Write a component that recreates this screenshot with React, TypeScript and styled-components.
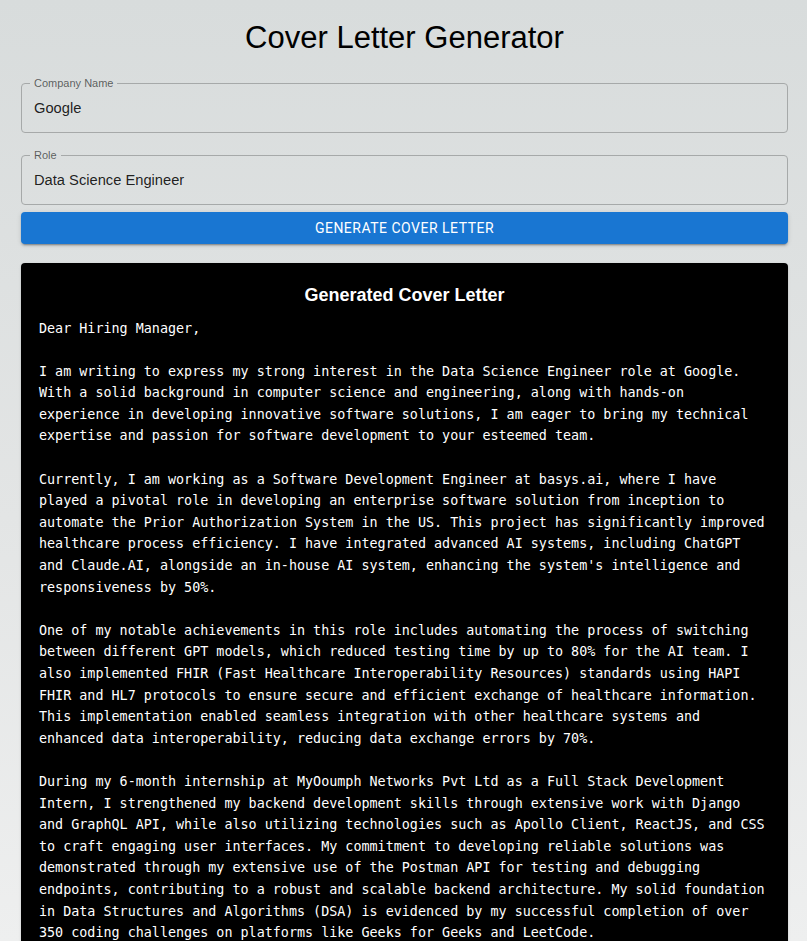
import React from "react";
import styled, { createGlobalStyle } from "styled-components";

const GlobalStyle = createGlobalStyle`
  html {
    min-height: 100%;
    background: linear-gradient(to bottom, #d8dcdc 0%, #e3e5e5 55%, #eeefef 100%);
    background-attachment: fixed;
  }
  body {
    margin: 0;
    font-family: "Liberation Sans", Arial, sans-serif;
    color: rgba(0, 0, 0, 0.87);
  }
  * { box-sizing: border-box; }
`;

const Page = styled.main`
  display: flex;
  flex-direction: column;
  padding: 20px 19px 0 21px;
`;

const Title = styled.h1`
  margin: 0 0 21px;
  font-family: "Liberation Sans", Arial, sans-serif;
  font-size: 31px;
  line-height: 36px;
  font-weight: 400;
  color: #000;
  text-align: center;
`;

const Field = styled.fieldset<{ $gap: number }>`
  margin: 0 0 ${(p) => p.$gap}px;
  padding: 0 12px 6px 8px;
  border: 1px solid #a6a9a9;
  border-radius: 4px;
  min-width: 0;
`;

const Legend = styled.legend`
  padding: 0 4px;
  font-family: "Liberation Sans", Arial, sans-serif;
  font-size: 11px;
  line-height: 12px;
  color: rgba(0, 0, 0, 0.6);
`;

const Input = styled.input`
  display: block;
  width: 100%;
  height: 36px;
  margin-top: 1px;
  padding: 0 4px;
  border: 0;
  outline: none;
  background: transparent;
  font-family: "Liberation Sans", Arial, sans-serif;
  font-size: 14.7px;
  color: rgba(0, 0, 0, 0.87);
`;

const GenerateButton = styled.button`
  height: 32px;
  margin: 0 0 19px;
  border: 0;
  border-radius: 4px;
  background: #1976d2;
  color: #fff;
  font-family: Roboto, "Liberation Sans", Arial, sans-serif;
  font-size: 14px;
  font-weight: 400;
  letter-spacing: 0.5px;
  text-transform: uppercase;
  box-shadow: 0 3px 1px -2px rgba(0, 0, 0, 0.2), 0 2px 2px 0 rgba(0, 0, 0, 0.14),
    0 1px 5px 0 rgba(0, 0, 0, 0.12);
  cursor: pointer;
`;

const Card = styled.section`
  background: #000;
  color: #fff;
  border-radius: 4px;
  padding: 18px;
  box-shadow: 0 2px 1px -1px rgba(0, 0, 0, 0.2), 0 1px 1px 0 rgba(0, 0, 0, 0.14),
    0 1px 3px 0 rgba(0, 0, 0, 0.12);
`;

const CardTitle = styled.h2`
  margin: 0 0 8.5px;
  font-family: "Liberation Sans", Arial, sans-serif;
  font-size: 18px;
  line-height: 28px;
  font-weight: 700;
  text-align: center;
`;

const Letter = styled.pre`
  margin: 0;
  font-family: "DejaVu Sans Mono", "Liberation Mono", monospace;
  font-size: 13.4px;
  line-height: 21.6px;
  white-space: pre-wrap;
  color: #fff;
`;

const letter = `Dear Hiring Manager,

I am writing to express my strong interest in the Data Science Engineer role at Google.
With a solid background in computer science and engineering, along with hands-on
experience in developing innovative software solutions, I am eager to bring my technical
expertise and passion for software development to your esteemed team.

Currently, I am working as a Software Development Engineer at basys.ai, where I have
played a pivotal role in developing an enterprise software solution from inception to
automate the Prior Authorization System in the US. This project has significantly improved
healthcare process efficiency. I have integrated advanced AI systems, including ChatGPT
and Claude.AI, alongside an in-house AI system, enhancing the system's intelligence and
responsiveness by 50%.

One of my notable achievements in this role includes automating the process of switching
between different GPT models, which reduced testing time by up to 80% for the AI team. I
also implemented FHIR (Fast Healthcare Interoperability Resources) standards using HAPI
FHIR and HL7 protocols to ensure secure and efficient exchange of healthcare information.
This implementation enabled seamless integration with other healthcare systems and
enhanced data interoperability, reducing data exchange errors by 70%.

During my 6-month internship at MyOoumph Networks Pvt Ltd as a Full Stack Development
Intern, I strengthened my backend development skills through extensive work with Django
and GraphQL API, while also utilizing technologies such as Apollo Client, ReactJS, and CSS
to craft engaging user interfaces. My commitment to developing reliable solutions was
demonstrated through my extensive use of the Postman API for testing and debugging
endpoints, contributing to a robust and scalable backend architecture. My solid foundation
in Data Structures and Algorithms (DSA) is evidenced by my successful completion of over
350 coding challenges on platforms like Geeks for Geeks and LeetCode.`;

export default function App() {
  return (
    <>
      <GlobalStyle />
      <Page>
        <Title>Cover Letter Generator</Title>
        <Field $gap={16}>
          <Legend>Company Name</Legend>
          <Input defaultValue="Google" />
        </Field>
        <Field $gap={7}>
          <Legend>Role</Legend>
          <Input defaultValue="Data Science Engineer" />
        </Field>
        <GenerateButton type="button">Generate Cover Letter</GenerateButton>
        <Card>
          <CardTitle>Generated Cover Letter</CardTitle>
          <Letter>{letter}</Letter>
        </Card>
      </Page>
    </>
  );
}
